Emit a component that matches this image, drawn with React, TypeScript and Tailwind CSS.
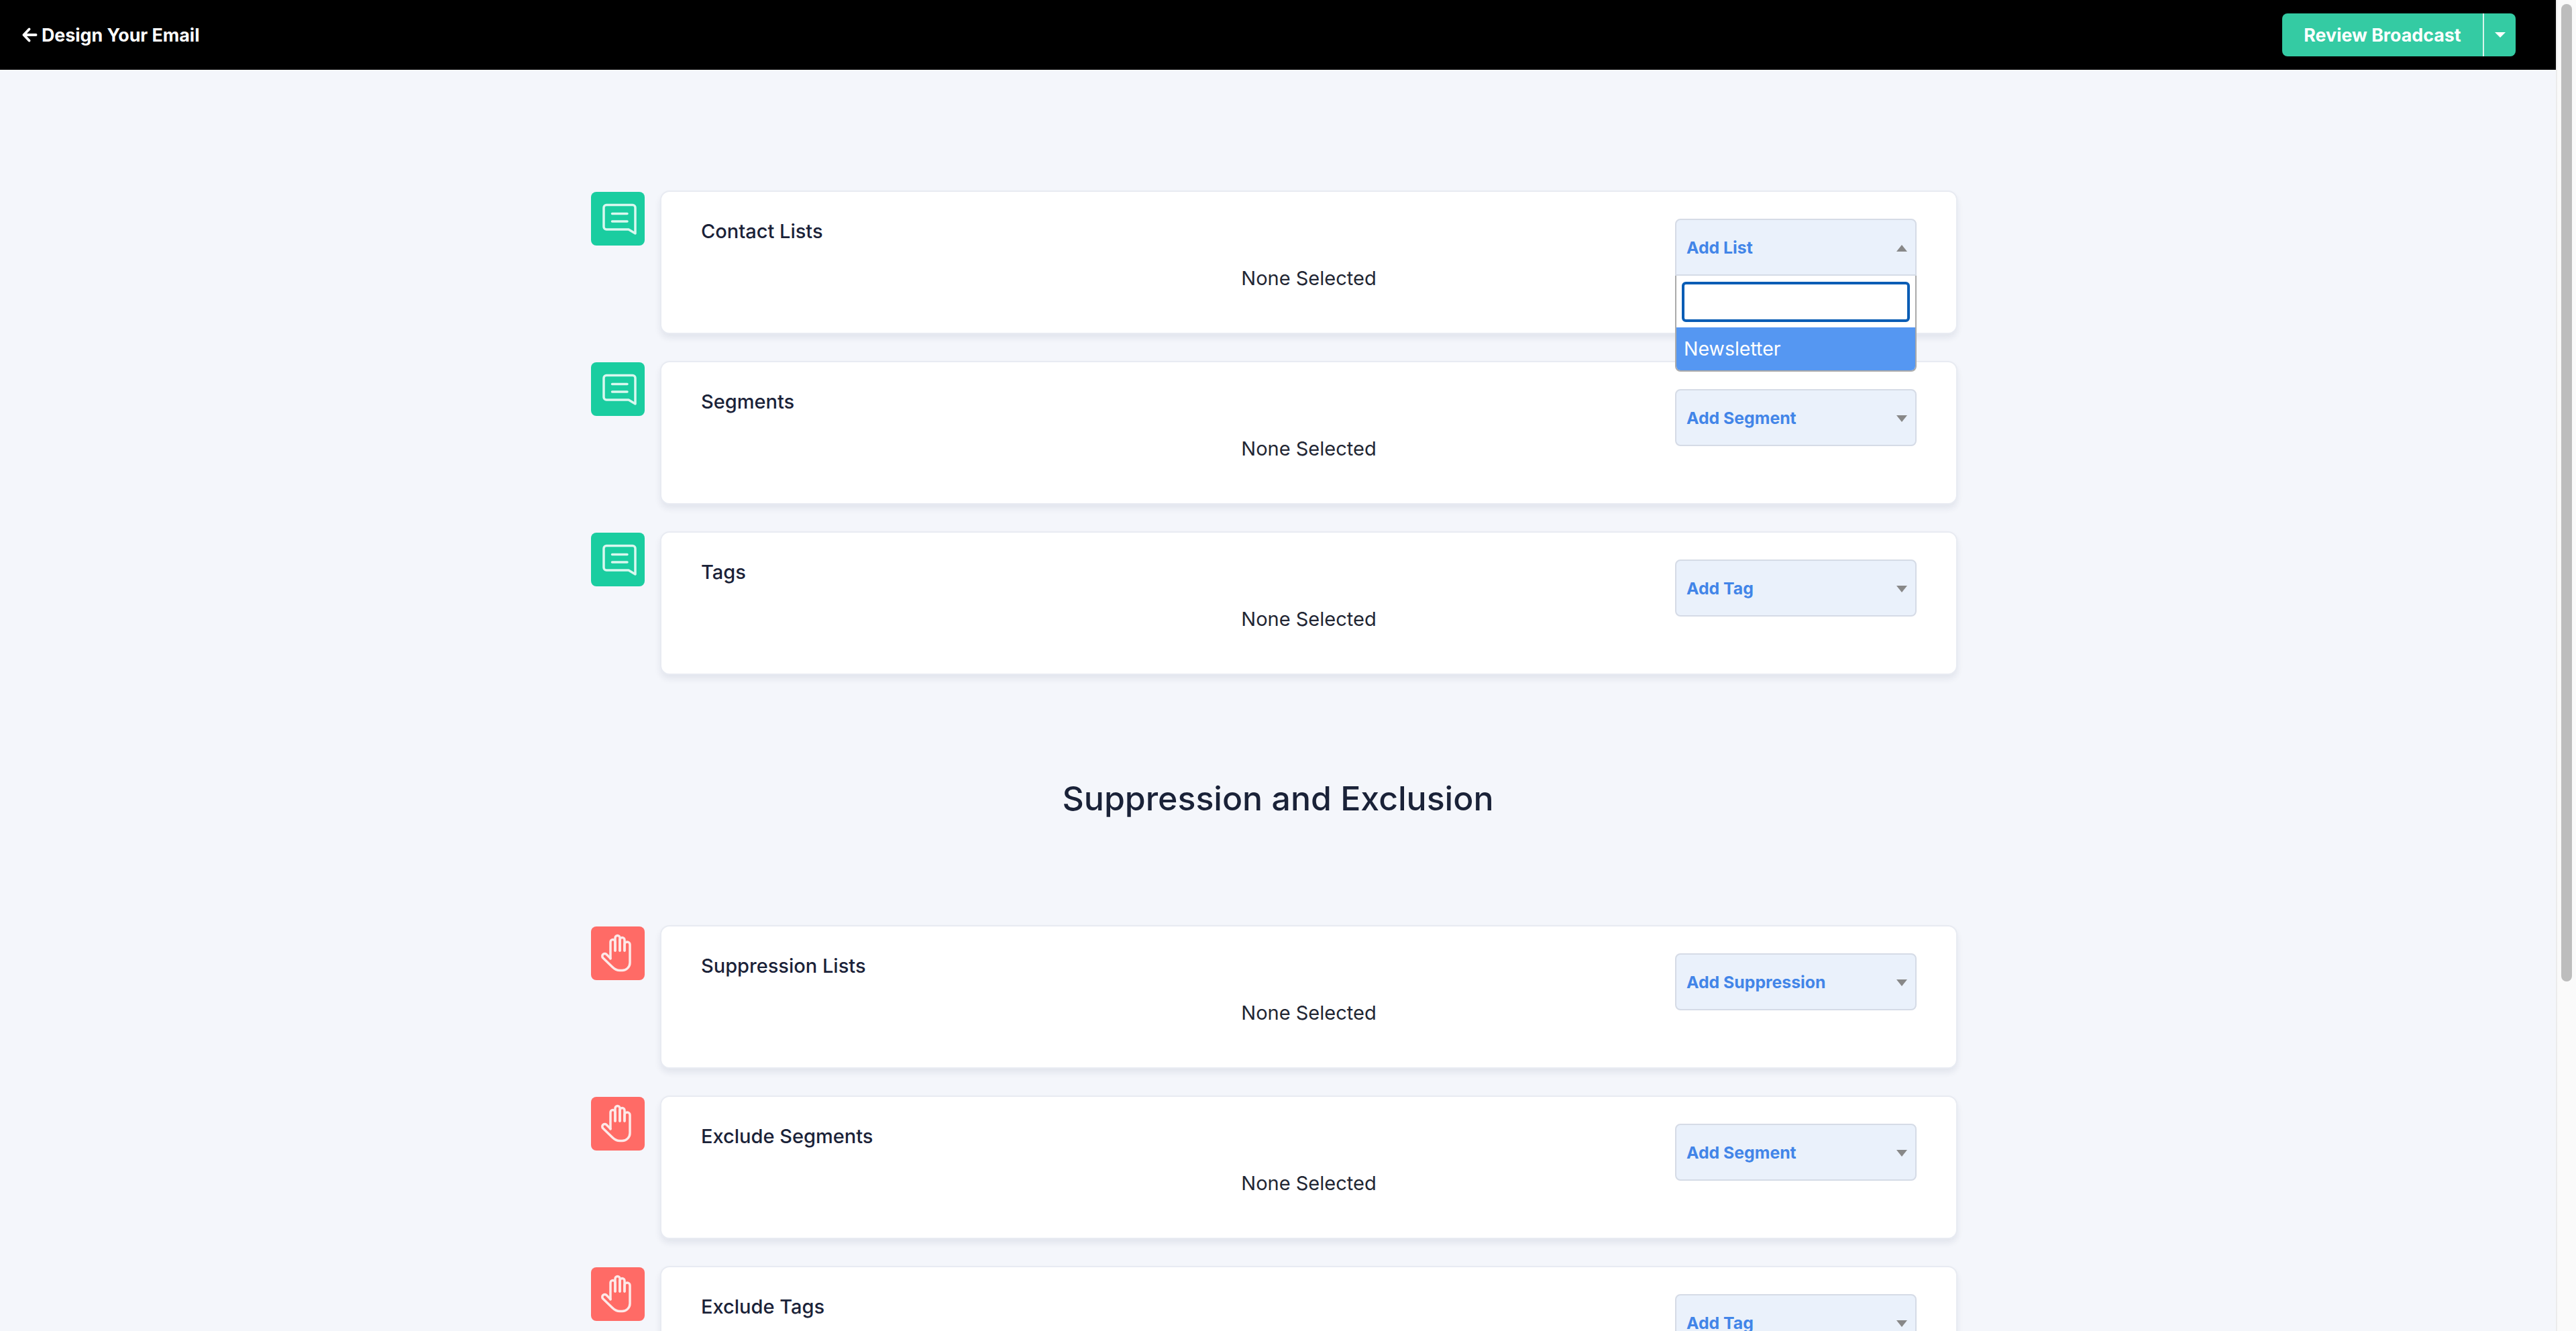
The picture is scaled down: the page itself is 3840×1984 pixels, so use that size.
import React from "react";

function ArrowIcon() {
  return (
    <svg width="24" height="24" viewBox="0 0 24 24" fill="none" stroke="#ffffff" strokeWidth="4" strokeLinecap="round" strokeLinejoin="round">
      <path d="M3.5 12 H21.5 M11.5 3.5 L3.5 12 L11.5 20.5" />
    </svg>
  );
}

function ChatIcon() {
  return (
    <svg width="80" height="80" viewBox="0 0 80 80" fill="none" stroke="#d9f8ef" strokeWidth="3.5" strokeLinecap="round" strokeLinejoin="round">
      <path d="M23 19.5 H62 a4 4 0 0 1 4 4 V62 L56 56 H23 a4 4 0 0 1 -4 -4 V23.5 a4 4 0 0 1 4 -4 Z" />
      <path d="M31.5 32.5 H54 M31.5 44 H54" />
    </svg>
  );
}

function HandIcon() {
  return (
    <svg width="80" height="80" viewBox="0 0 80 80" fill="none" stroke="#fde9e8" strokeWidth="3.5" strokeLinecap="round" strokeLinejoin="round">
      <path d="M29 48 V23 a3.5 3.5 0 0 1 7 0 V36" />
      <path d="M36 36 V17 a3.5 3.5 0 0 1 7 0 V36" />
      <path d="M43 36 V20 a3.5 3.5 0 0 1 7 0 V36" />
      <path d="M50 36 V27 a4 4 0 0 1 8 0 V54 a11.5 11.5 0 0 1 -11.5 11.5 H43 c-5 0 -8 -2 -11 -5 L18 47 a3.5 3.5 0 0 1 5 -5.5 l6 6" />
    </svg>
  );
}

function Caret({ up = false }: { up?: boolean }) {
  return (
    <svg width="16" height="10" viewBox="0 0 16 10" fill="#888888">
      <path d={up ? "M8 0 L16 10 H0 Z" : "M0 0 H16 L8 10 Z"} />
    </svg>
  );
}

function Row({
  title,
  add,
  kind,
  open = false,
}: {
  title: string;
  add: string;
  kind: "chat" | "hand";
  open?: boolean;
}) {
  return (
    <div className="flex mb-[40px] mr-[11px]">
      <div
        className={`mt-[2px] w-[80px] h-[80px] rounded-[8px] shrink-0 ${
          kind === "chat" ? "bg-[#1acda0]" : "bg-[#ff6b66]"
        }`}
      >
        {kind === "chat" ? <ChatIcon /> : <HandIcon />}
      </div>
      <div className="ml-[23px] flex-1 h-[214px] bg-white rounded-[14px] border-2 border-[#e8ebf2] shadow-[0_6px_10px_rgba(30,40,80,0.08)] grid grid-cols-[1fr_auto_1fr] px-[59px]">
        <div className="pt-[39px] text-[29px] leading-[40px] font-medium text-[#1a2238]">{title}</div>
        <div className="pt-[109px] text-[29px] leading-[40px] text-[#222633]">None Selected</div>
        <div className="flex justify-end pt-[40px]">
          <div className="relative w-[360px] h-[85px]">
            <div
              className={`h-full w-full flex items-center justify-between pt-[3px] pl-[15px] pr-[12px] bg-[#eaf1fb] border-2 border-[#d5dbe6] ${
                open ? "rounded-t-[8px]" : "rounded-[8px]"
              }`}
            >
              <span className="text-[24.8px] font-bold text-[#4285e8]">{add}</span>
              <Caret up={open} />
            </div>
            {open && (
              <div className="absolute z-10 top-full left-0 right-0 bg-white border-x-2 border-b-2 border-[#aaaaaa] rounded-b-[8px] overflow-hidden">
                <div className="px-[8px] pt-[9px] pb-[8px]">
                  <div className="h-[60px] rounded-[6px] border-[4px] border-[#0a5db5] bg-white" />
                </div>
                <div className="h-[64px] flex items-center pl-[11px] bg-[#5597f2] text-white text-[28.5px]">Newsletter</div>
              </div>
            )}
          </div>
        </div>
      </div>
    </div>
  );
}

export default function App() {
  return (
    <div className="flex h-[1984px] overflow-hidden bg-[#f4f6fb] font-['Inter',sans-serif]">
      <div className="flex-1 min-w-0">
        <header className="h-[104px] bg-black flex items-center justify-between pl-[32px] pr-[60px]">
          <div className="flex items-center gap-[6px] text-white text-[26.8px] font-bold">
            <ArrowIcon />
            <span>Design Your Email</span>
          </div>
          <div className="flex h-[64px] w-[348px] rounded-[8px] bg-[#34cba3] text-white">
            <div className="w-[301px] flex items-center justify-center border-r-2 border-[#d9f5ec] text-[26.8px] font-bold">
              Review Broadcast
            </div>
            <div className="flex-1 flex items-center justify-center">
              <svg width="16" height="8" viewBox="0 0 16 8" fill="#ffffff">
                <path d="M0 0 H16 L8 8 Z" />
              </svg>
            </div>
          </div>
        </header>
        <main className="w-[2048px] mx-auto pt-[180px]">
          <Row kind="chat" title="Contact Lists" add="Add List" open />
          <Row kind="chat" title="Segments" add="Add Segment" />
          <Row kind="chat" title="Tags" add="Add Tag" />
          <h2 className="text-center text-[50px] leading-[70px] font-medium text-[#1a2238] pt-[109px] pb-[154px]">
            Suppression and Exclusion
          </h2>
          <Row kind="hand" title="Suppression Lists" add="Add Suppression" />
          <Row kind="hand" title="Exclude Segments" add="Add Segment" />
          <Row kind="hand" title="Exclude Tags" add="Add Tag" />
        </main>
      </div>
      <div className="w-[30px] shrink-0 bg-[#fafafa] border-l-2 border-[#ececec] pl-[6px] pr-[6px] pt-[6px]">
        <div className="h-[1457px] rounded-full bg-[#bdbdbd]" />
      </div>
    </div>
  );
}
